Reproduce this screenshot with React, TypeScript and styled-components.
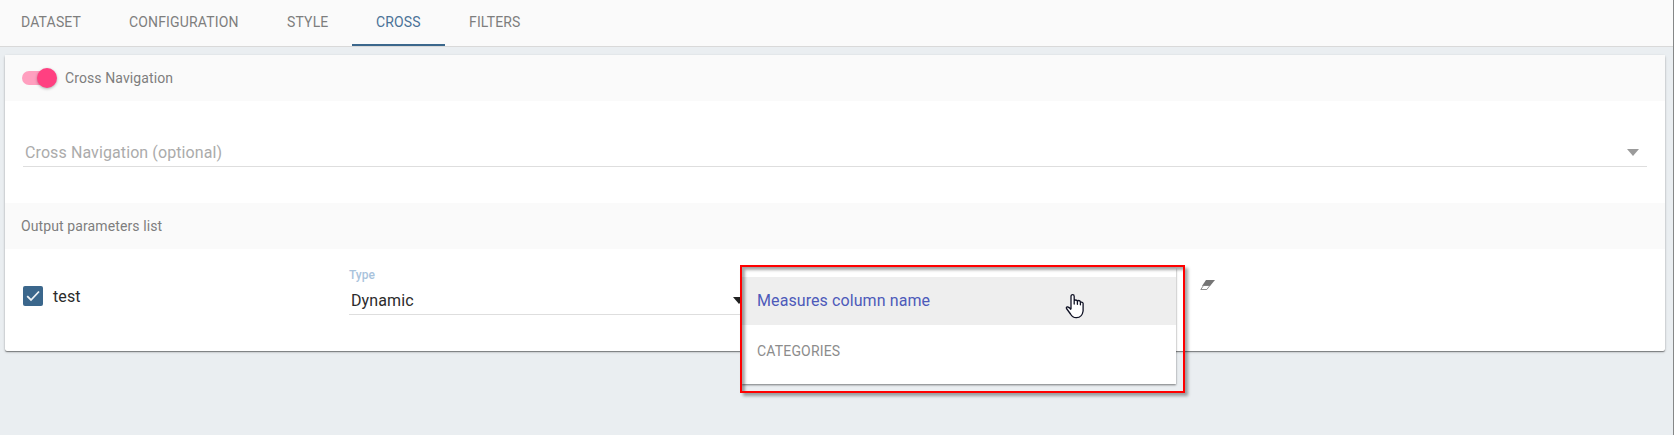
import React from "react";
import styled, { createGlobalStyle } from "styled-components";

const GlobalStyle = createGlobalStyle`
  * { box-sizing: border-box; }
  body {
    margin: 0;
    background: #eaeef1;
    font-family: Roboto, "Liberation Sans", sans-serif;
    color: #2b2b2b;
    overflow: hidden;
  }
`;

const Page = styled.div`
  height: 435px;
  border-right: 1px solid #858787;
`;

const TabBar = styled.nav`
  display: flex;
  height: 47px;
  background: #fafafa;
  border-bottom: 1px solid #d9d9d9;
`;

const Tab = styled.button<{ $width: number; $active?: boolean; $first?: boolean }>`
  width: ${(p) => p.$width}px;
  height: 46px;
  padding: 0 0 0 ${(p) => (p.$first ? 21 : 24)}px;
  border: 0;
  border-bottom: 2px solid ${(p) => (p.$active ? "#3b678c" : "transparent")};
  background: none;
  color: ${(p) => (p.$active ? "#4a7297" : "#7e7e7e")};
  font: 400 14px/20px Roboto, sans-serif;
  letter-spacing: 0.16px;
  text-align: left;
  white-space: nowrap;
`;

const Card = styled.main`
  position: relative;
  margin: 8px 8px 0 5px;
  height: 296px;
  border-radius: 2px;
  background: #fff;
  box-shadow: 0 1px 3px rgba(0, 0, 0, 0.2), 0 1px 1px rgba(0, 0, 0, 0.4);
`;

const SectionHeader = styled.header`
  display: flex;
  align-items: center;
  height: 46px;
  padding-left: 16px;
  background: #fafafa;
  color: #7e7e7e;
  font-size: 14px;
`;

const Switch = styled.span`
  display: flex;
  align-items: center;
  justify-content: flex-end;
  width: 34px;
  height: 14px;
  margin: 0 9px 0 1px;
  border-radius: 7px;
  background: #ff9fbf;
`;

const Thumb = styled.span`
  flex: none;
  width: 20px;
  height: 20px;
  margin-right: -1px;
  border-radius: 50%;
  background: #ff4081;
  box-shadow: 0 1px 3px rgba(0, 0, 0, 0.3);
`;

const Label = styled.span<{ $spacing?: number }>`
  letter-spacing: ${(p) => p.$spacing ?? 0}px;
  white-space: nowrap;
`;

const SelectArea = styled.div`
  height: 102px;
  padding: 38px 18px 0;
`;

const Select = styled.div<{ $muted?: boolean; $arrowInset?: number }>`
  display: flex;
  align-items: center;
  justify-content: space-between;
  height: 28px;
  padding: 0 ${(p) => p.$arrowInset ?? 8}px 1px 2px;
  border-bottom: 1px solid #dedede;
  color: ${(p) => (p.$muted ? "#ababab" : "#2b2b2b")};
  font-size: 16px;
`;

const Arrow = styled.span<{ $color: string }>`
  flex: none;
  border: 6px solid transparent;
  border-top: 7px solid ${(p) => p.$color};
  border-bottom: 0;
`;

const ParameterRow = styled.div`
  display: flex;
  height: 102px;
  padding-left: 18px;
`;

const CheckCell = styled.div`
  display: flex;
  align-items: center;
  width: 326px;
  height: 94px;
  gap: 10px;
  font-size: 16px;
`;

const CheckBox = styled.span`
  display: flex;
  width: 20px;
  height: 20px;
  border-radius: 2px;
  background: #3b678c;
`;

const TypeField = styled.div`
  width: 400px;
  padding-top: 18px;
`;

const FieldLabel = styled.div`
  height: 20px;
  color: #a9c3dc;
  font: 500 12px/17px Roboto, sans-serif;
`;

const EraserButton = styled.span`
  display: flex;
  margin: 31px 0 0 451px;
  height: 10px;
`;

const Menu = styled.div`
  position: absolute;
  top: 213px;
  left: 737px;
  width: 434px;
  height: 116px;
  padding-top: 9px;
  background: #fff;
  box-shadow: 0 1px 2px rgba(0, 0, 0, 0.5);
`;

const MenuOption = styled.div`
  display: flex;
  align-items: center;
  height: 48px;
  padding: 0 0 1px 15px;
  background: #eee;
  color: #4d5aba;
  font-size: 16px;
`;

const MenuGroup = styled.div`
  display: flex;
  align-items: center;
  height: 52px;
  padding-left: 15px;
  color: #8c8c8c;
  font-size: 14px;
`;

const Highlight = styled.div`
  position: absolute;
  top: 210px;
  left: 735px;
  width: 445px;
  height: 128px;
  border: 2px solid #f00;
  box-shadow: 3px 3px 3px rgba(0, 0, 0, 0.35), inset 3px 3px 3px rgba(0, 0, 0, 0.35);
`;

const Pointer = styled.svg`
  position: absolute;
  top: 239px;
  left: 1060px;
`;

const tabs = [
  { name: "DATASET", width: 105 },
  { name: "CONFIGURATION", width: 158 },
  { name: "STYLE", width: 89 },
  { name: "CROSS", width: 93 },
  { name: "FILTERS", width: 101 },
];

export default function App() {
  return (
    <Page>
      <GlobalStyle />
      <TabBar>
        {tabs.map((tab, i) => (
          <Tab key={tab.name} $width={tab.width} $first={i === 0} $active={tab.name === "CROSS"}>
            {tab.name}
          </Tab>
        ))}
      </TabBar>
      <Card>
        <SectionHeader>
          <Switch><Thumb /></Switch>
          <Label $spacing={0.1}>Cross Navigation</Label>
        </SectionHeader>
        <SelectArea>
          <Select $muted>
            <Label $spacing={0.1}>Cross Navigation (optional)</Label>
            <Arrow $color="#9b9b9b" />
          </Select>
        </SelectArea>
        <SectionHeader><Label $spacing={0.11}>Output parameters list</Label></SectionHeader>
        <ParameterRow>
          <CheckCell>
            <CheckBox>
              <svg width="20" height="20" viewBox="0 0 20 20" fill="none" stroke="#eef2f5" strokeWidth="1.8">
                <path d="M4.2 10.2 8 14l8-8.5" />
              </svg>
            </CheckBox>
            <Label $spacing={0.12}>test</Label>
          </CheckCell>
          <TypeField>
            <FieldLabel>Type</FieldLabel>
            <Select $arrowInset={4}>
              <Label $spacing={0.12}>Dynamic</Label>
              <Arrow $color="#212121" />
            </Select>
          </TypeField>
          <EraserButton>
            <svg width="15" height="10" viewBox="0 0 15 10">
              <path d="M6 0h9l-5 6H2z" fill="#757575" />
              <path d="M3.5 5.5 .8 9.5h6l3.1-4z" fill="#fff" stroke="#757575" strokeWidth="0.8" />
            </svg>
          </EraserButton>
        </ParameterRow>
        <Menu>
          <MenuOption><Label $spacing={0.09}>Measures column name</Label></MenuOption>
          <MenuGroup><Label $spacing={0.18}>CATEGORIES</Label></MenuGroup>
        </Menu>
        <Highlight />
        <Pointer width="20" height="25" viewBox="0 0 20 25" fill="#fff" stroke="#101225" strokeWidth="1.3" strokeLinejoin="round">
          <path d="M6 15V2.5q0-1.8 1.6-1.8T9.2 2.5V10V7q0-1 1.5-1t1.7 1.3v3V7.5q0-1 1.3-1t1.7 1.3v3-2q0-1 1.3-.7t1.4 1.3V17q-1 6.5-6.5 6.7Q7.7 24 5.5 20L1.5 14.5q-.6-2 1.3-1.5T6 15.8" />
        </Pointer>
      </Card>
    </Page>
  );
}
